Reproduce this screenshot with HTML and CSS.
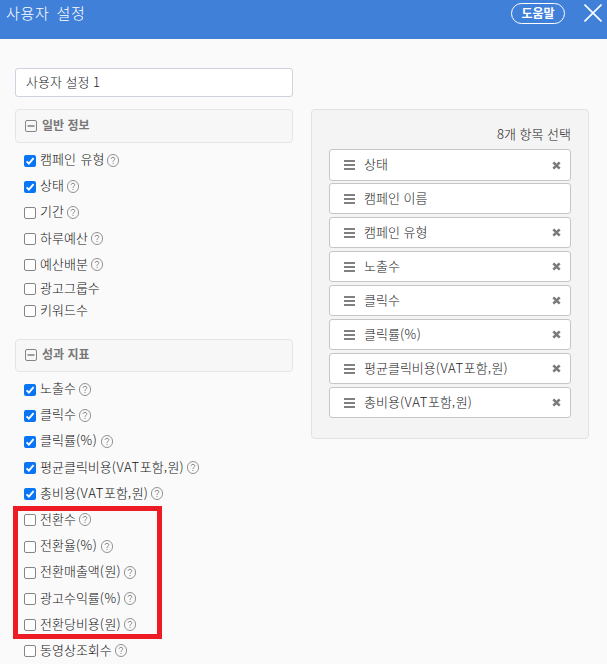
FILE: index.html
```html
<!DOCTYPE html>
<html lang="ko">
<head>
<meta charset="utf-8">
<title>사용자 설정</title>
<link rel="stylesheet" href="styles.css">
</head>
<body>
<svg class="defs" width="0" height="0" aria-hidden="true">
  <symbol id="help" viewBox="0 0 12 13"><rect x=".5" y=".5" width="11" height="12" rx="5.5" fill="none" stroke="#929292"/><path d="M4.2 5V4.6Q4.4 3.3 6 3.3T7.8 4.8Q7.8 5.6 6.9 6.3Q6 6.9 6 7.9M6 8.9V10" fill="none" stroke="#8c8c8c"/></symbol>
  <symbol id="minus" viewBox="0 0 12 12"><rect x=".5" y=".5" width="11" height="11" rx="1.5" fill="none" stroke="#858585"/><path d="M2.5 6H9.5" stroke="#777" stroke-width="1.4"/></symbol>
  <symbol id="check" viewBox="0 0 12 12"><path d="M2.6 6.3L4.9 8.7L9.6 3.2" fill="none" stroke="#fff" stroke-width="1.9"/></symbol>
  <symbol id="bars" viewBox="0 0 11 10"><path d="M0 1H11M0 5H11M0 9H11" stroke="#808080" stroke-width="1.8"/></symbol>
  <symbol id="remove" viewBox="0 0 9 9"><path d="M1.3 1.3L7.7 7.7M7.7 1.3L1.3 7.7" stroke="#7b7b7b" stroke-width="2.6"/></symbol>
</svg>
<header class="topbar">
  <h1>사용자 설정</h1>
  <button class="help-button">도움말</button>
  <svg class="close" viewBox="0 0 18 18"><path d="M.5 .5L17.5 17.5M17.5 .5L.5 17.5" stroke="#fff" stroke-width="1.6"/></svg>
</header>
<main class="content">
  <section class="left">
    <input class="name" type="text" value="사용자 설정 1">
    <h2 class="group"><svg><use href="#minus"/></svg><span>일반 정보</span></h2>
    <ul class="options">
      <li><i class="box on"><svg><use href="#check"/></svg></i><span>캠페인 유형</span><svg><use href="#help"/></svg></li>
      <li><i class="box on"><svg><use href="#check"/></svg></i><span>상태</span><svg><use href="#help"/></svg></li>
      <li><i class="box"></i><span>기간</span><svg><use href="#help"/></svg></li>
      <li><i class="box"></i><span>하루예산</span><svg><use href="#help"/></svg></li>
      <li><i class="box"></i><span>예산배분</span><svg><use href="#help"/></svg></li>
      <li class="plain"><i class="box"></i><span>광고그룹수</span></li>
      <li class="plain"><i class="box"></i><span>키워드수</span></li>
    </ul>
    <h2 class="group second"><svg><use href="#minus"/></svg><span>성과 지표</span></h2>
    <ul class="options">
      <li><i class="box on"><svg><use href="#check"/></svg></i><span>노출수</span><svg><use href="#help"/></svg></li>
      <li><i class="box on"><svg><use href="#check"/></svg></i><span>클릭수</span><svg><use href="#help"/></svg></li>
      <li><i class="box on"><svg><use href="#check"/></svg></i><span>클릭률<b>(%)</b></span><svg><use href="#help"/></svg></li>
      <li><i class="box on"><svg><use href="#check"/></svg></i><span>평균클릭비용<b>(VAT</b>포함<b>,</b>원<b>)</b></span><svg><use href="#help"/></svg></li>
      <li><i class="box on"><svg><use href="#check"/></svg></i><span>총비용<b>(VAT</b>포함<b>,</b>원<b>)</b></span><svg><use href="#help"/></svg></li>
      <li><i class="box"></i><span>전환수</span><svg><use href="#help"/></svg></li>
      <li><i class="box"></i><span>전환율<b>(%)</b></span><svg><use href="#help"/></svg></li>
      <li><i class="box"></i><span>전환매출액<b>(</b>원<b>)</b></span><svg><use href="#help"/></svg></li>
      <li><i class="box"></i><span>광고수익률<b>(%)</b></span><svg><use href="#help"/></svg></li>
      <li><i class="box"></i><span>전환당비용<b>(</b>원<b>)</b></span><svg><use href="#help"/></svg></li>
      <li><i class="box"></i><span>동영상조회수</span><svg><use href="#help"/></svg></li>
    </ul>
  </section>
  <section class="panel">
    <p class="count">8개 항목 선택</p>
    <ul class="selected">
      <li><svg class="bars"><use href="#bars"/></svg><span>상태</span><svg class="remove"><use href="#remove"/></svg></li>
      <li><svg class="bars"><use href="#bars"/></svg><span>캠페인 이름</span></li>
      <li><svg class="bars"><use href="#bars"/></svg><span>캠페인 유형</span><svg class="remove"><use href="#remove"/></svg></li>
      <li><svg class="bars"><use href="#bars"/></svg><span>노출수</span><svg class="remove"><use href="#remove"/></svg></li>
      <li><svg class="bars"><use href="#bars"/></svg><span>클릭수</span><svg class="remove"><use href="#remove"/></svg></li>
      <li><svg class="bars"><use href="#bars"/></svg><span>클릭률<b>(%)</b></span><svg class="remove"><use href="#remove"/></svg></li>
      <li><svg class="bars"><use href="#bars"/></svg><span>평균클릭비용<b>(VAT</b>포함<b>,</b>원<b>)</b></span><svg class="remove"><use href="#remove"/></svg></li>
      <li><svg class="bars"><use href="#bars"/></svg><span>총비용<b>(VAT</b>포함<b>,</b>원<b>)</b></span><svg class="remove"><use href="#remove"/></svg></li>
    </ul>
  </section>
</main>
<div class="highlight"></div>
</body>
</html>
```
FILE: styles.css
```css
* { box-sizing: border-box; }
body {
  margin: 0;
  height: 664px;
  overflow: hidden;
  position: relative;
  background: #fafafa;
  color: #111;
  font: 300 13px/18px "Noto Sans CJK KR", sans-serif;
}
ul, h1, h2, p { margin: 0; padding: 0; list-style: none; }
b { font-weight: inherit; letter-spacing: .6px; }
svg { display: block; flex: none; }
.defs { position: absolute; }
.topbar {
  display: flex;
  align-items: flex-start;
  height: 39px;
  padding: 3px 5px 0 6px;
  background: #4180d9;
  color: #fff;
}
.topbar h1 { flex: 1; font-size: 15px; font-weight: 300; line-height: 20px; letter-spacing: .7px; word-spacing: 2px; }
.help-button {
  width: 54px;
  height: 21px;
  margin-right: 19px;
  padding: 0 0 2px;
  border: 1px solid #fff;
  border-radius: 11px;
  background: none;
  color: #fff;
  font: 700 12px/17px "Noto Sans CJK KR", sans-serif;
}
.close { width: 18px; height: 18px; margin-top: 1px; }
.content { display: flex; align-items: flex-start; gap: 18px; padding: 29px 18px 0 15px; }
.left { width: 278px; }
.name {
  display: block;
  width: 100%;
  height: 29px;
  padding: 0 10px 3px;
  border: 1px solid #ced3df;
  border-radius: 3px;
  background: #fff;
  color: #222;
  font: 300 13px/18px "Noto Sans CJK KR", sans-serif;
}
.group {
  display: flex;
  align-items: center;
  gap: 5px;
  height: 34px;
  margin: 12px 0 4px;
  padding-left: 9px;
  border: 1px solid #e5e5e5;
  border-radius: 4px;
  background: #f7f7f7;
  color: #777;
  font-size: 12px;
  font-weight: 700;
}
.group svg { width: 12px; height: 12px; }
.group span { position: relative; top: -1px; }
.group.second { height: 33px; margin-top: 17px; }
.options li { display: flex; align-items: center; height: 26.2px; padding-left: 9px; }
.options li.plain { height: 22px; }
.box {
  position: relative;
  top: .5px;
  width: 12px;
  height: 12px;
  margin-right: 4px;
  border: 1px solid #858585;
  border-radius: 2px;
  background: #fff;
}
.box.on { border: 0; background: #0875f5; }
.options span { position: relative; top: -1px; word-spacing: 1px; }
.options svg { width: 12px; height: 13px; margin-left: 3px; }
.options .box svg { width: 12px; height: 12px; margin: 0; }
.panel {
  width: 278px;
  height: 330px;
  margin-top: 41px;
  padding: 15px 17px 0;
  border: 1px solid #e2e2e2;
  border-radius: 4px;
  background: #f4f4f4;
  color: #222;
}
.count { height: 24px; text-align: right; }
.selected { display: grid; grid-auto-rows: 31px; row-gap: 3px; }
.selected li {
  display: flex;
  align-items: center;
  padding: 0 9px 0 14px;
  border: 1px solid #c6c6c6;
  border-radius: 3px;
  background: #fff;
}
.selected li:first-child { height: 32px; }
.selected span { flex: 1; position: relative; top: -1px; }
.bars { width: 11px; height: 10px; margin-right: 9px; }
.remove { width: 9px; height: 9px; }
.highlight {
  position: absolute;
  left: 13px;
  top: 506px;
  width: 149px;
  height: 133px;
  border: 5px solid #ed1c24;
}
```
